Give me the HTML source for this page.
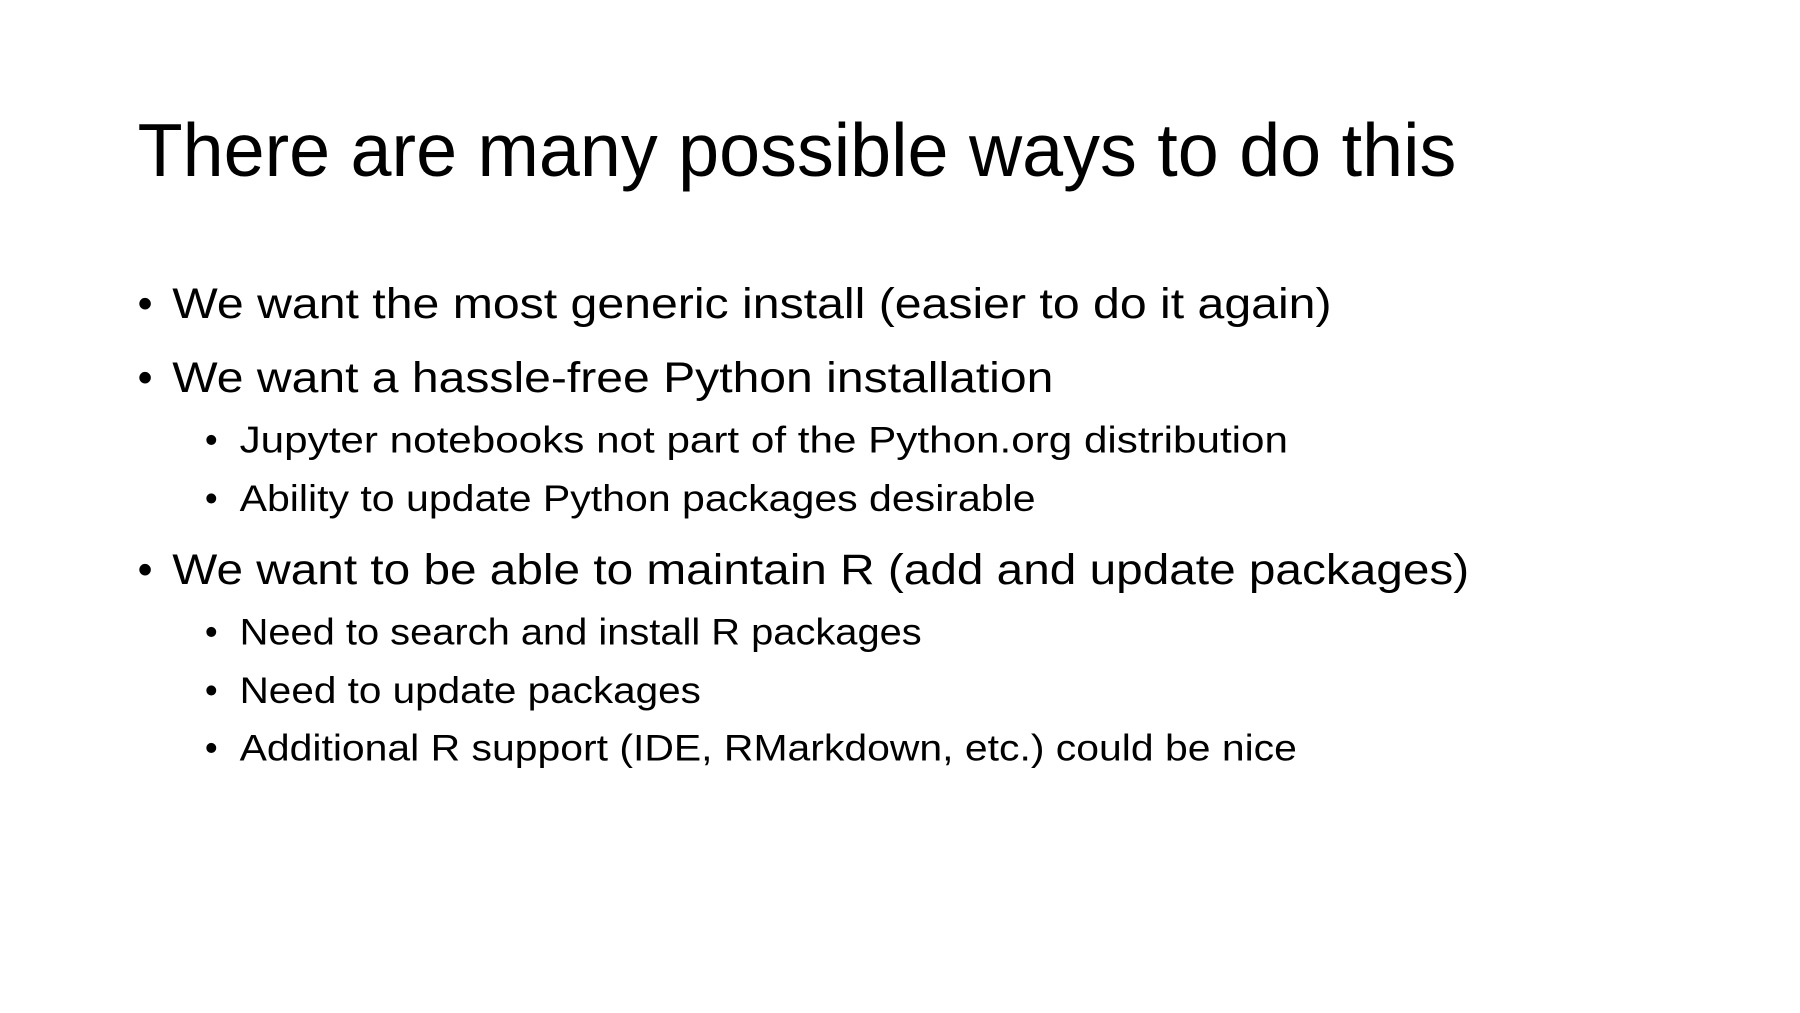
<!DOCTYPE html>
<html><head><meta charset="utf-8"><style>
html,body{margin:0;padding:0;background:#fff;width:1800px;height:1013px;overflow:hidden}
svg text{font-family:"Liberation Sans",sans-serif;fill:#000}
</style></head><body>
<svg width="1800" height="1013" xmlns="http://www.w3.org/2000/svg">
<g transform="scale(0.99)">
<text x="139" y="178" font-size="76" textLength="1332" lengthAdjust="spacingAndGlyphs">There are many possible ways to do this</text>
<g font-size="43">
<text x="139" y="321">•</text>
<text x="174" y="321" textLength="1171" lengthAdjust="spacingAndGlyphs">We want the most generic install (easier to do it again)</text>
<text x="139" y="396">•</text>
<text x="174" y="396" textLength="890" lengthAdjust="spacingAndGlyphs">We want a hassle-free Python installation</text>
<text x="139" y="590">•</text>
<text x="174" y="590" textLength="1310" lengthAdjust="spacingAndGlyphs">We want to be able to maintain R (add and update packages)</text>
</g>
<g font-size="37">
<text x="207" y="457">•</text>
<text x="242" y="457" textLength="1059" lengthAdjust="spacingAndGlyphs">Jupyter notebooks not part of the Python.org distribution</text>
<text x="207" y="516">•</text>
<text x="242" y="516" textLength="804" lengthAdjust="spacingAndGlyphs">Ability to update Python packages desirable</text>
<text x="207" y="651">•</text>
<text x="242" y="651" textLength="689" lengthAdjust="spacingAndGlyphs">Need to search and install R packages</text>
<text x="207" y="710">•</text>
<text x="242" y="710" textLength="466" lengthAdjust="spacingAndGlyphs">Need to update packages</text>
<text x="207" y="768">•</text>
<text x="242" y="768" textLength="1068" lengthAdjust="spacingAndGlyphs">Additional R support (IDE, RMarkdown, etc.) could be nice</text>
</g>
</g>
</svg>
</body></html>
